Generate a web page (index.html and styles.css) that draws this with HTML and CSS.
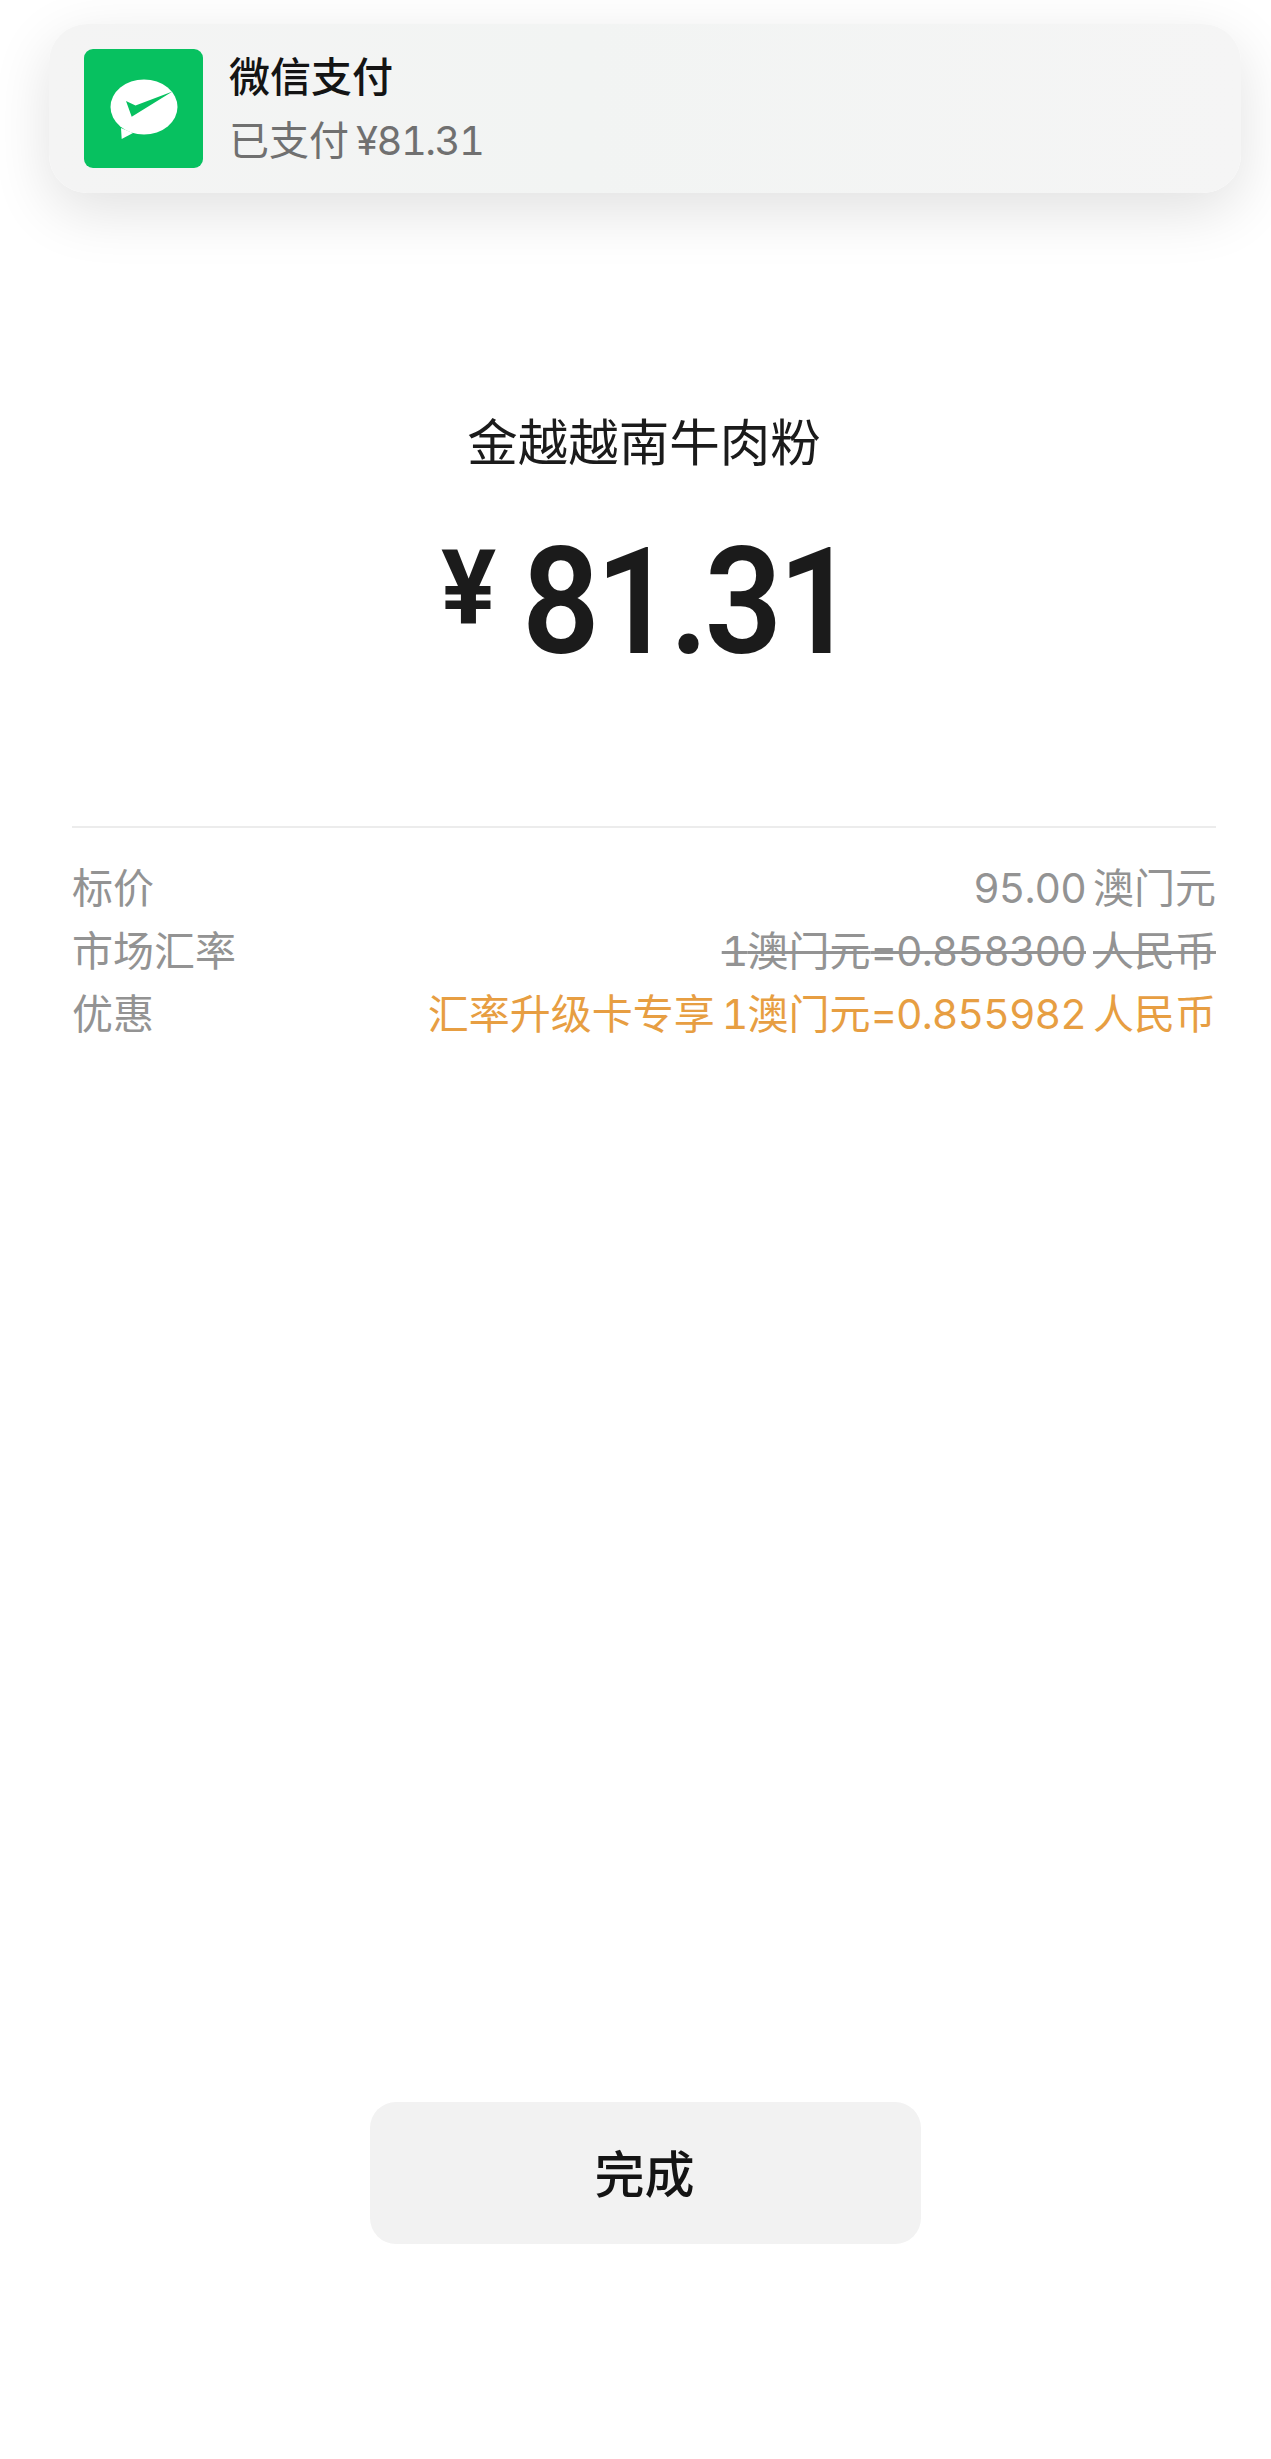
FILE: index.html
```html
<!DOCTYPE html>
<html lang="zh-CN">
<head>
    <meta charset="UTF-8">
    <meta name="viewport" content="width=device-width, initial-scale=1.0">
    <title>微信支付</title>
    <link rel="stylesheet" href="styles.css">
</head>
<body>
    <div class="page">
        <div class="notice">
            <svg class="notice-icon" viewBox="0 0 119 119" aria-hidden="true">
                <rect width="119" height="119" rx="9" fill="#07c160"/>
                <ellipse cx="60" cy="58" rx="33.5" ry="27.5" fill="#fff"/>
                <path d="M37 79 L37.7 90 L49 84 Z" fill="#fff"/>
                <path d="M42 52 L47.7 67.7 L88.5 42.5 L51.5 56.5 Z" fill="#07c160"/>
            </svg>
            <div class="notice-text">
                <div class="notice-title">微信支付</div>
                <div class="notice-sub">已支付<span class="gap"></span><span class="num">¥81.31</span></div>
            </div>
        </div>

        <div class="merchant">金越越南牛肉粉</div>
        <div class="amount"><span class="amount-sign">¥</span><span class="amount-num">81.31</span></div>

        <div class="details">
            <div class="row">
                <span class="row-label">标价</span>
                <span><span class="num">95.00</span><span class="gap"></span>澳门元</span>
            </div>
            <div class="row">
                <span class="row-label">市场汇率</span>
                <span class="strike"><span class="num">1</span>澳门元<span class="num">=0.858300</span><span class="gap"></span>人民币</span>
            </div>
            <div class="row">
                <span class="row-label">优惠</span>
                <span class="promo">汇率升级卡专享<span class="gap"></span><span class="num">1</span>澳门元<span class="num">=0.855982</span><span class="gap"></span>人民币</span>
            </div>
        </div>

        <button class="done" type="button">完成</button>
    </div>
</body>
</html>
```

FILE: styles.css
```css
body {
    margin: 0;
    background: #fff;
    font-family: Inter, "Noto Sans CJK SC", sans-serif;
    color: #1b1b1b;
}
.page {
    height: 2459px;
    overflow: hidden;
    display: flex;
    flex-direction: column;
}
.num {
    font-variant-numeric: tabular-nums;
    letter-spacing: -0.9px;
}
.gap {
    display: inline-block;
    width: 7px;
}

/* --- notification banner --- */
.notice {
    display: flex;
    align-items: center;
    gap: 26px;
    height: 169px;
    margin: 24px 30px 0 49px;
    padding-left: 35px;
    background: linear-gradient(90deg, #f4f4f4, #f2f4f3 45%, #f5f5f5);
    border-radius: 38px;
    box-shadow: 0 18px 60px rgba(0, 0, 0, 0.12);
    flex-shrink: 0;
}
.notice-icon {
    width: 119px;
    height: 119px;
    flex-shrink: 0;
}
.notice-title {
    font-size: 41px;
    line-height: 58px;
    font-weight: 500;
    color: #141414;
}
.notice-sub {
    margin-top: 6px;
    font-size: 40px;
    line-height: 58px;
    color: #707070;
}
.notice-sub .num {
    letter-spacing: -1.5px;
}

/* --- merchant and amount --- */
.merchant {
    margin: 220px 0 0 17px;
    text-align: center;
    font-size: 50.5px;
    line-height: 60px;
}
.amount {
    display: flex;
    justify-content: center;
    margin: 46px 0 0 0;
    padding-left: 21px;
    height: 170px;
    font-family: Roboto, sans-serif;
    font-weight: 600;
}
.amount-sign {
    margin-right: 26px;
    font-size: 103px;
    line-height: 138px;
    font-weight: 700;
}
/* Roboto digits run wide, squeeze them to the narrower payment font */
.amount-num {
    font-size: 148px;
    line-height: 168px;
    letter-spacing: -4.3px;
    transform: scaleX(0.92);
    transform-origin: left center;
    margin-right: -30px;
}

/* --- detail rows --- */
.details {
    margin: 137px 55px 0 72px;
    padding-top: 29px;
    border-top: 2px solid #ececec;
    color: #939393;
    font-size: 41px;
}
.row {
    display: flex;
    justify-content: space-between;
    height: 63px;
    line-height: 63px;
}
.strike {
    text-decoration: line-through;
    text-decoration-thickness: 3px;
}
.promo {
    color: #e79e42;
}

/* --- done button --- */
.done {
    display: block;
    width: 551px;
    height: 142px;
    margin: 1056px 0 0 370px;
    padding: 0 2px 4px 0;
    border: none;
    border-radius: 26px;
    background: #f2f2f2;
    color: #141414;
    font-family: "Noto Sans CJK SC", sans-serif;
    font-size: 50px;
    font-weight: 500;
    flex-shrink: 0;
}
```
